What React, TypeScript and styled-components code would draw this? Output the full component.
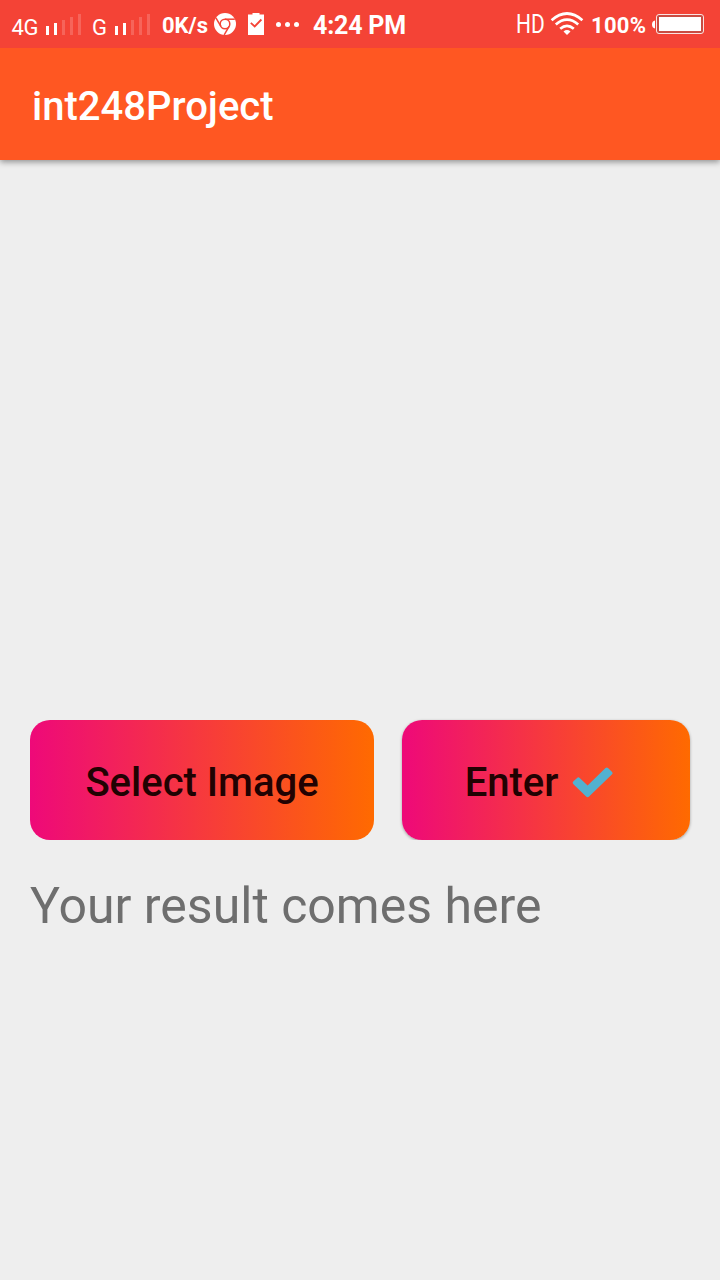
import React from "react";
import styled, { createGlobalStyle } from "styled-components";

const GlobalStyle = createGlobalStyle`
  * { box-sizing: border-box; }
  body { margin: 0; background: #eeeeee; font-family: Roboto, "Liberation Sans", sans-serif; }
`;

const Screen = styled.div`
  width: 720px;
  height: 1280px;
  display: flex;
  flex-direction: column;
  background: #eeeeee;
  overflow: hidden;
`;

const StatusBar = styled.header`
  height: 48px;
  display: flex;
  align-items: flex-start;
  padding-right: 16px;
  background: #f44336;
  color: #fff;
`;

const StatusText = styled.span<{ $left: number; $top: number; $width: number; $size: number; $weight: number; $spacing?: number }>`
  flex: none;
  width: ${(p) => p.$width}px;
  margin-left: ${(p) => p.$left}px;
  padding-top: ${(p) => p.$top}px;
  font-size: ${(p) => p.$size}px;
  font-weight: ${(p) => p.$weight};
  letter-spacing: ${(p) => p.$spacing ?? 0}px;
  line-height: 28px;
  white-space: nowrap;
`;

const NarrowText = styled(StatusText)`
  transform: scaleX(0.84);
  transform-origin: left;
`;

const StatusIcon = styled.svg<{ $left?: number }>`
  flex: none;
  display: block;
  margin-left: ${(p) => p.$left ?? 0}px;
`;

const Spacer = styled.div`
  flex: 1;
`;

const AppBar = styled.div`
  flex: none;
  height: 112px;
  padding: 6px 32px 0;
  display: flex;
  align-items: center;
  background: #ff5722;
  box-shadow: 0 2px 6px rgba(0, 0, 0, 0.4);
  clip-path: inset(0 0 -12px 0);
`;

const Title = styled.h1`
  margin: 0;
  color: #fff;
  font-size: 40px;
  font-weight: 500;
  line-height: 48px;
`;

const Content = styled.main`
  flex: 1;
  display: flex;
  flex-direction: column;
  padding: 0 30px;
`;

const ImageArea = styled.div`
  height: 560px;
`;

const ButtonRow = styled.div`
  display: flex;
  gap: 28px;
`;

const GradientButton = styled.button<{ $width: number; $raised?: boolean; $inset?: number }>`
  width: ${(p) => p.$width}px;
  height: 120px;
  padding: 6px ${(p) => p.$inset ?? 0}px 0 0;
  border: 0;
  border-radius: 20px;
  display: flex;
  align-items: center;
  justify-content: center;
  gap: 14px;
  background: linear-gradient(90deg, #ee0979, #ff6a00);
  box-shadow: ${(p) => (p.$raised ? "0 1px 3px rgba(0, 0, 0, 0.35)" : "none")};
  clip-path: inset(-2px -4px 0 -4px);
  color: #210202;
  font-family: inherit;
  font-size: 40px;
  font-weight: 500;
  line-height: 48px;
`;

const Result = styled.p`
  margin: 36px 0 0;
  color: #6e6e6e;
  font-size: 50px;
  line-height: 60px;
`;

const Signal = ({ left }: { left: number }) => (
  <StatusIcon $left={left} width="35" height="48" fill="#fff">
    <rect x="0" y="26" width="3" height="9" />
    <rect x="8" y="23" width="3" height="12" />
    <rect x="16" y="20" width="3" height="15" opacity="0.18" />
    <rect x="24" y="17" width="3" height="18" opacity="0.18" />
    <rect x="32" y="14" width="3" height="21" opacity="0.18" />
  </StatusIcon>
);

const Chrome = () => (
  <StatusIcon $left={5} width="24" height="48" viewBox="213 0 24 48">
    <circle cx="225" cy="24" r="11" fill="#fff" />
    <g fill="none" stroke="#f44336" strokeWidth="1.5">
      <circle cx="225" cy="24" r="4.8" />
      <path d="M225 19.2H234.8" />
      <path d="M220.9 26.3L215.9 17.9" />
      <path d="M229.1 26.3L224.2 34.8" />
    </g>
  </StatusIcon>
);

const Clipboard = () => (
  <StatusIcon $left={11} width="16" height="48">
    <path d="M0 14.5H4.5V13H11.5V14.5H16V35H0Z" fill="#fff" />
    <path d="M2.8 22.8L6.7 26.4L13.4 19.5" fill="none" stroke="#f44336" strokeWidth="1.8" />
  </StatusIcon>
);

const Dots = () => (
  <StatusIcon $left={12} width="24" height="48" fill="#fff">
    <circle cx="2.5" cy="24.5" r="2.5" />
    <circle cx="11.5" cy="24.5" r="2.5" />
    <circle cx="20.5" cy="24.5" r="2.5" />
  </StatusIcon>
);

const Wifi = () => (
  <StatusIcon width="34" height="48" viewBox="550 0 34 48" fill="none" stroke="#fff" strokeWidth="2.7">
    <path d="M551.6 20.2Q567 6.8 582.4 20.2" />
    <path d="M555.8 24.5Q567 14.8 578.2 24.5" />
    <path d="M560.2 28.8Q567 23 573.8 28.8" />
    <path d="M563.5 31.4Q567 28.6 570.5 31.4L567 35Z" fill="#fff" stroke="none" />
  </StatusIcon>
);

const Battery = () => (
  <StatusIcon width="52" height="48" viewBox="652 0 52 48">
    <path d="M655 20.5V28.5Q652 28 652 24.5Q652 21 655 20.5Z" fill="#fff" />
    <rect x="656.5" y="14.5" width="47" height="19" rx="2.5" fill="#c94c42" stroke="#fff" strokeOpacity="0.85" />
    <rect x="659" y="17" width="42" height="14" fill="#fff" />
  </StatusIcon>
);

const Check = () => (
  <svg width="42" height="32" viewBox="0 0 42 32">
    <path
      d="M1.2 14.6L5.1 10.9Q6.4 9.8 7.7 11L15.6 18.5L33.5 1Q34.8 0 36 1L40.1 4.9Q41.2 6.1 40.1 7.3L17.1 29.6Q15.6 31 14.1 29.6L1.2 17Q0 15.8 1.2 14.6Z"
      fill="#52b1d0"
    />
  </svg>
);

export default function App() {
  return (
    <Screen>
      <GlobalStyle />
      <StatusBar>
        <StatusText $left={11.5} $top={14} $width={28.5} $size={22} $weight={400} $spacing={-0.3}>4G</StatusText>
        <Signal left={6} />
        <StatusText $left={11} $top={14} $width={16} $size={22} $weight={400}>G</StatusText>
        <Signal left={7} />
        <StatusText $left={12} $top={12} $width={46} $size={22} $weight={700}>0K/s</StatusText>
        <Chrome />
        <Clipboard />
        <Dots />
        <StatusText $left={13} $top={12} $width={94} $size={25} $weight={700} $spacing={-0.2}>4:24 PM</StatusText>
        <Spacer />
        <NarrowText $left={0} $top={11} $width={34} $size={25} $weight={400}>HD</NarrowText>
        <Wifi />
        <StatusText $left={7} $top={12} $width={61} $size={22} $weight={700} $spacing={0.3}>100%</StatusText>
        <Battery />
      </StatusBar>
      <AppBar>
        <Title>int248Project</Title>
      </AppBar>
      <Content>
        <ImageArea />
        <ButtonRow>
          <GradientButton $width={344}>Select Image</GradientButton>
          <GradientButton $width={288} $raised $inset={13}>
            Enter
            <Check />
          </GradientButton>
        </ButtonRow>
        <Result>Your result comes here</Result>
      </Content>
    </Screen>
  );
}
